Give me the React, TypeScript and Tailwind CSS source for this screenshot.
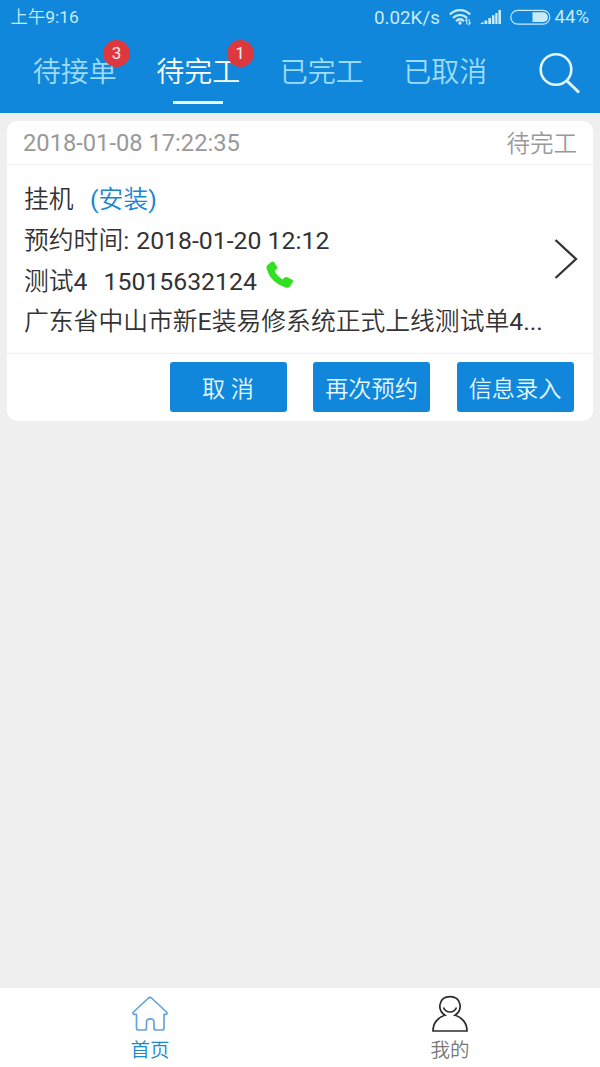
import React from 'react';

const tabs = [
  { label: '待接单', badge: 3, active: false },
  { label: '待完工', badge: 1, active: true },
  { label: '已完工', badge: 0, active: false },
  { label: '已取消', badge: 0, active: false },
];

function StatusBar() {
  return (
    <div className="flex h-[34px] items-center pl-[10.500px] pr-[10px] text-[#c8ebfc]">
      <span className="w-[69px] pt-[1px] text-[17.4px]"><span className="font-[350]">上午</span>9:16</span>
      <span className="ml-auto w-[68px] pt-[2px] text-[18.8px]">0.02K/s</span>
      <svg className="ml-[7px] h-[18px] w-[24px]" viewBox="0 0 24 18" fill="none" stroke="currentColor" strokeWidth="2.2">
        <path d="M.8 6.5C6.5 .6 15.500 .6 21.200 6.500" />
        <path d="M4 10C8 6 14 6 18 10" />
        <path d="M7 13.200C9.500 10.800 12.500 10.800 15 13.200" />
        <circle cx="11" cy="15" r="1.700" fill="currentColor" stroke="none" />
        <path d="M17.800 16.500v-5.500l-1.500 2M20.200 11v5.500l1.600-2" strokeWidth="1.100" />
      </svg>
      <svg className="ml-[6px] h-[16px] w-[23px]" viewBox="0 0 23 16" fill="currentColor">
        <path d="M1 15L4.500 12.800V15zM5.500 11.500H8.300V15H5.500zM9.300 9H12V15H9.300zM12.900 6.300H15.500V15H12.900zM16.300 4H18.500V15H16.300zM19.400 1H22V15H19.400z" />
      </svg>
      <svg className="ml-[7.500px] h-[16px] w-[41px]" viewBox="0 0 41 16" fill="none">
        <rect x=".8" y="1.300" width="39" height="13.800" rx="6.900" stroke="currentColor" strokeWidth="1.200" />
        <path d="M22.500 3.300h10.500a4.900 4.900 0 0 1 0 9.800H22.500z" fill="currentColor" />
      </svg>
      <span className="ml-[4px] w-[35.500px] pt-[2px] text-[18.600px]">44%</span>
    </div>
  );
}

function Header() {
  return (
    <header className="h-[113px] shrink-0 bg-[#1087db]">
      <StatusBar />
      <div className="flex h-[79px] items-start pl-[13px]">
        {tabs.map((tab) => (
          <div key={tab.label} className="relative flex w-[123.500px] flex-col items-center">
            <span className={`mt-[19px] text-[28px] leading-[40px] font-[350] ${tab.active ? 'text-white' : 'text-[#9edcfb]'}`}>
              {tab.label}
            </span>
            {tab.active && <span className="mt-[8px] h-[2.500px] w-[50px] bg-[#e8faff]" />}
            {tab.badge > 0 && (
              <span className="absolute top-[6px] left-[90px] flex size-[27px] items-center justify-center rounded-full bg-[#dc383e] text-[17px] text-[#ffe9ec]">
                {tab.badge}
              </span>
            )}
          </div>
        ))}
        <svg className="mt-[18px] ml-[31px] h-[43px] w-[43px]" viewBox="0 0 43 43" fill="none" stroke="#e2f7ff" strokeWidth="2.600">
          <circle cx="18" cy="17.500" r="15.300" />
          <path d="M28.500 28.500L41 40.500" strokeWidth="3" />
        </svg>
      </div>
    </header>
  );
}

function ActionButton({ children }: { children: React.ReactNode }) {
  return (
    <button className="h-[50px] w-[117px] rounded-[3px] bg-[#1087db] pt-[4px] text-[23.200px] leading-[46px] font-[350] whitespace-pre text-[#e3f7ff]">
      {children}
    </button>
  );
}

function OrderCard() {
  return (
    <section className="mx-[7px] mt-[8px] h-[300px] rounded-[10px] bg-white">
      <div className="flex h-[44px] items-center justify-between border-b border-[#f1f1f1] pt-[3px] pr-[16px] pl-[16px] text-[23.700px] text-[#999]">
        <span>2018-01-08 17:22:35</span>
        <span className="pt-[1px] text-[23.500px] font-[350]">待完工</span>
      </div>
      <div className="flex h-[189px] items-center justify-between border-b border-[#f1f1f1] pr-[15px] pl-[17px]">
        <div className="pt-[5px] text-[24.800px] leading-[40.600px] font-normal whitespace-pre text-[#333]">
          <div>
            <span className="font-[350]">挂机</span>
            <span className="ml-[16.500px] text-[#1b86d2]">(<span className="font-[350]">安装</span>)</span>
          </div>
          <div>
            <span className="font-[350]">预约时间</span>:
            <span className="ml-[7px]">2018-01-20 12:12</span>
          </div>
          <div className="flex">
            <span><span className="font-[350]">测试</span>4</span>
            <span className="ml-[16px]">15015632124</span>
            <svg className="-mt-[0.500px] ml-[9px] h-[28px] w-[28px]" viewBox="0 0 28 28" fill="#32df22">
              <path d="M1.300 4.200L5.600.8Q7.200-.1 8.400 1.400L11 5.800Q11.600 7.200 10.400 8.300L8.600 10Q11.800 15.800 16.600 18.400L18.500 16.600Q19.700 15.700 21 16.300L26 18.400Q27.700 19.400 26.900 21L23.800 25.800Q22.600 27.300 19.700 26.400Q5 22 .7 8.300Q.1 5.400 1.300 4.200z" />
            </svg>
          </div>
          <div>
            <span className="font-[350]">广东省中山市新</span>E<span className="font-[350]">装易修系统正式上线测试单</span>4...
          </div>
        </div>
        <svg className="h-[42px] w-[24px] shrink-0" viewBox="0 0 24 42" fill="none" stroke="#333" strokeWidth="2.300">
          <path d="M1.500 2L22 21L1.500 40" />
        </svg>
      </div>
      <div className="flex justify-end gap-[26.500px] pt-[8px] pr-[19.500px]">
        <ActionButton>取 消</ActionButton>
        <ActionButton>再次预约</ActionButton>
        <ActionButton>信息录入</ActionButton>
      </div>
    </section>
  );
}

function BottomNav() {
  return (
    <nav className="mt-auto flex h-[79px] shrink-0 bg-white text-[19.500px] leading-[28px] font-[350]">
      <div className="flex flex-1 flex-col items-center text-[#1b86d2]">
        <svg className="mt-[8px] h-[36px] w-[36px]" viewBox="0 0 36 36" fill="none" stroke="#65a3df" strokeWidth="1.700" strokeLinejoin="round">
          <path d="M16.500 2Q18 .8 19.500 2L34.500 16Q35.800 18.200 34 18.400H32V32Q32 34 30 34H24Q22 34 22 32V26C22 21.800 14.500 21.800 14.500 26V32Q14.500 34 12.500 34H6.500Q4.500 34 4.500 32V18.400H2Q.3 18.200 1.500 16z" />
        </svg>
        <span className="mt-[5px]">首页</span>
      </div>
      <div className="flex flex-1 flex-col items-center text-[#777]">
        <svg className="mt-[7px] h-[37px] w-[36px]" viewBox="0 0 36 37" fill="none" stroke="#2b2b2b" strokeWidth="1.700">
          <path d="M13 20.300C4.500 14.500 7 1.700 18 1.700S31.500 14.500 23 20.300C30 22.200 35 28 35 36H1C1 28 6 22.200 13 20.300z" />
          <path d="M11.500 12.500C14 18.500 22 18.500 24.500 12.500" />
        </svg>
        <span className="mt-[5px]">我的</span>
      </div>
    </nav>
  );
}

export default function App() {
  return (
    <main className="flex h-[1067px] w-[600px] flex-col overflow-hidden bg-[#efefef] font-[Roboto,'Noto_Sans_CJK_SC',sans-serif]">
      <Header />
      <OrderCard />
      <BottomNav />
    </main>
  );
}
